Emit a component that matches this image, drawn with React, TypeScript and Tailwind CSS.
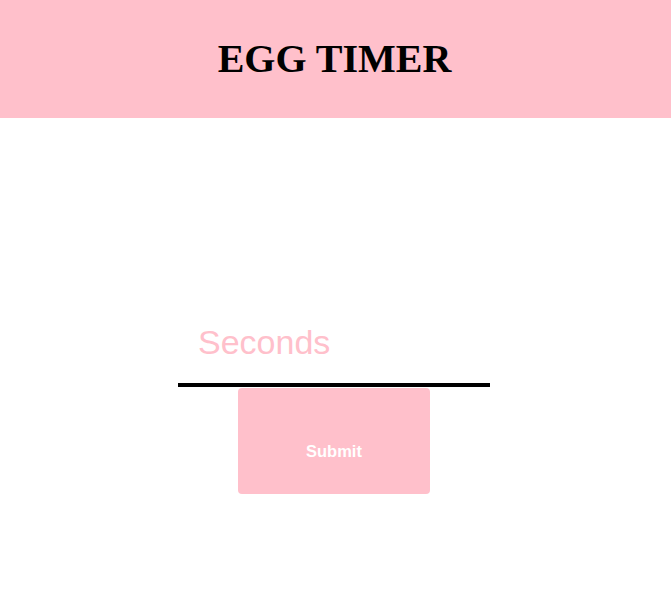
import React from "react";

export default function App() {
  return (
    <div className="min-h-screen bg-white">
      <header className="h-[118px] bg-[#ffc0cb] flex items-center justify-center pr-[2px]">
        <h1
          className="text-[40px] font-bold text-black leading-none"
          style={{ fontFamily: '"Liberation Serif", "Times New Roman", serif' }}
        >
          EGG TIMER
        </h1>
      </header>
      <main
        className="flex flex-col items-center pt-[185px] pr-[3px]"
        style={{ fontFamily: '"Liberation Sans", Arial, sans-serif' }}
      >
        <input
          type="text"
          placeholder="Seconds"
          className="w-[312px] h-[84px] box-border border-0 border-b-4 border-black pl-[20px] pb-[2px] text-[34px] outline-none placeholder:text-[#ffc0cb] bg-white"
        />
        <button className="mt-[1px] w-[192px] h-[106px] rounded-[4px] bg-[#ffc0cb] text-white font-bold text-[16.5px] flex flex-col items-center justify-start pt-[54px] leading-[18px]">
          Submit
        </button>
      </main>
    </div>
  );
}
